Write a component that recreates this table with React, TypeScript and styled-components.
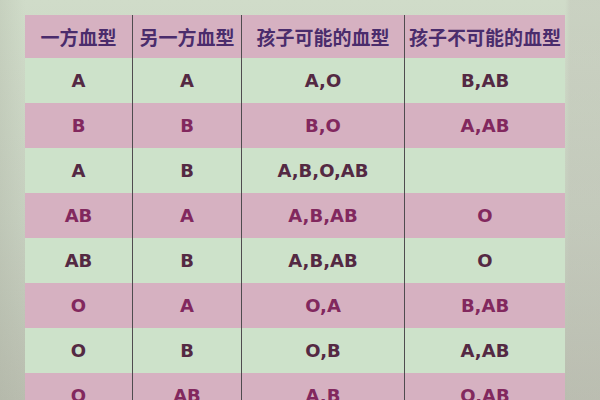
import React from "react";
import styled, { createGlobalStyle } from "styled-components";

const GlobalStyle = createGlobalStyle`
  html, body {
    margin: 0;
    padding: 0;
    width: 600px;
    height: 400px;
    overflow: hidden;
  }
  body {
    background: linear-gradient(180deg, #d0dcc9 0%, #c6cfbf 55%, #b9bdaf 100%);
  }
`;

const Page = styled.div`
  width: 600px;
  height: 400px;
  padding: 15px 0 0 25px;
  box-sizing: border-box;
  background: linear-gradient(90deg, rgba(170, 175, 160, 0.25) 0px, rgba(0, 0, 0, 0) 25px,
    rgba(0, 0, 0, 0) 565px, rgba(190, 190, 180, 0.35) 570px);
`;

const Table = styled.div`
  width: 540px;
  display: flex;
  flex-direction: column;
`;

const Row = styled.div<{ $tone: "pink" | "green"; $head?: boolean }>`
  display: grid;
  grid-template-columns: 108px 109px 163px 160px;
  height: ${(p) => (p.$head ? 43 : 45)}px;
  background: ${(p) => (p.$tone === "pink" ? "#d6b1c1" : "#cde2ca")};
`;

const Cell = styled.div<{ $head?: boolean; $tone: "pink" | "green"; $last?: boolean }>`
  display: flex;
  align-items: center;
  justify-content: center;
  border-right: ${(p) => (p.$last ? "none" : "1px solid #4f4c4f")};
  font-family: ${(p) =>
    p.$head
      ? '"Noto Sans CJK SC", "Noto Sans", sans-serif'
      : '"DejaVu Sans", Verdana, sans-serif'};
  font-weight: 700;
  font-size: ${(p) => (p.$head ? 19 : 18)}px;
  color: ${(p) => (p.$head ? "#4a2c6c" : p.$tone === "pink" ? "#82285e" : "#542943")};
  white-space: nowrap;
`;

const headers = ["一方血型", "另一方血型", "孩子可能的血型", "孩子不可能的血型"];

const rows: string[][] = [
  ["A", "A", "A,O", "B,AB"],
  ["B", "B", "B,O", "A,AB"],
  ["A", "B", "A,B,O,AB", ""],
  ["AB", "A", "A,B,AB", "O"],
  ["AB", "B", "A,B,AB", "O"],
  ["O", "A", "O,A", "B,AB"],
  ["O", "B", "O,B", "A,AB"],
  ["O", "AB", "A,B", "O,AB"],
];

export default function App() {
  return (
    <>
      <GlobalStyle />
      <Page>
        <Table>
          <Row $tone="pink" $head>
            {headers.map((h, i) => (
              <Cell key={h} $head $tone="pink" $last={i === 3}>
                {h}
              </Cell>
            ))}
          </Row>
          {rows.map((r, ri) => {
            const tone = ri % 2 === 0 ? "green" : "pink";
            return (
              <Row key={ri} $tone={tone}>
                {r.map((c, ci) => (
                  <Cell key={ci} $tone={tone} $last={ci === 3}>
                    {c}
                  </Cell>
                ))}
              </Row>
            );
          })}
        </Table>
      </Page>
    </>
  );
}
